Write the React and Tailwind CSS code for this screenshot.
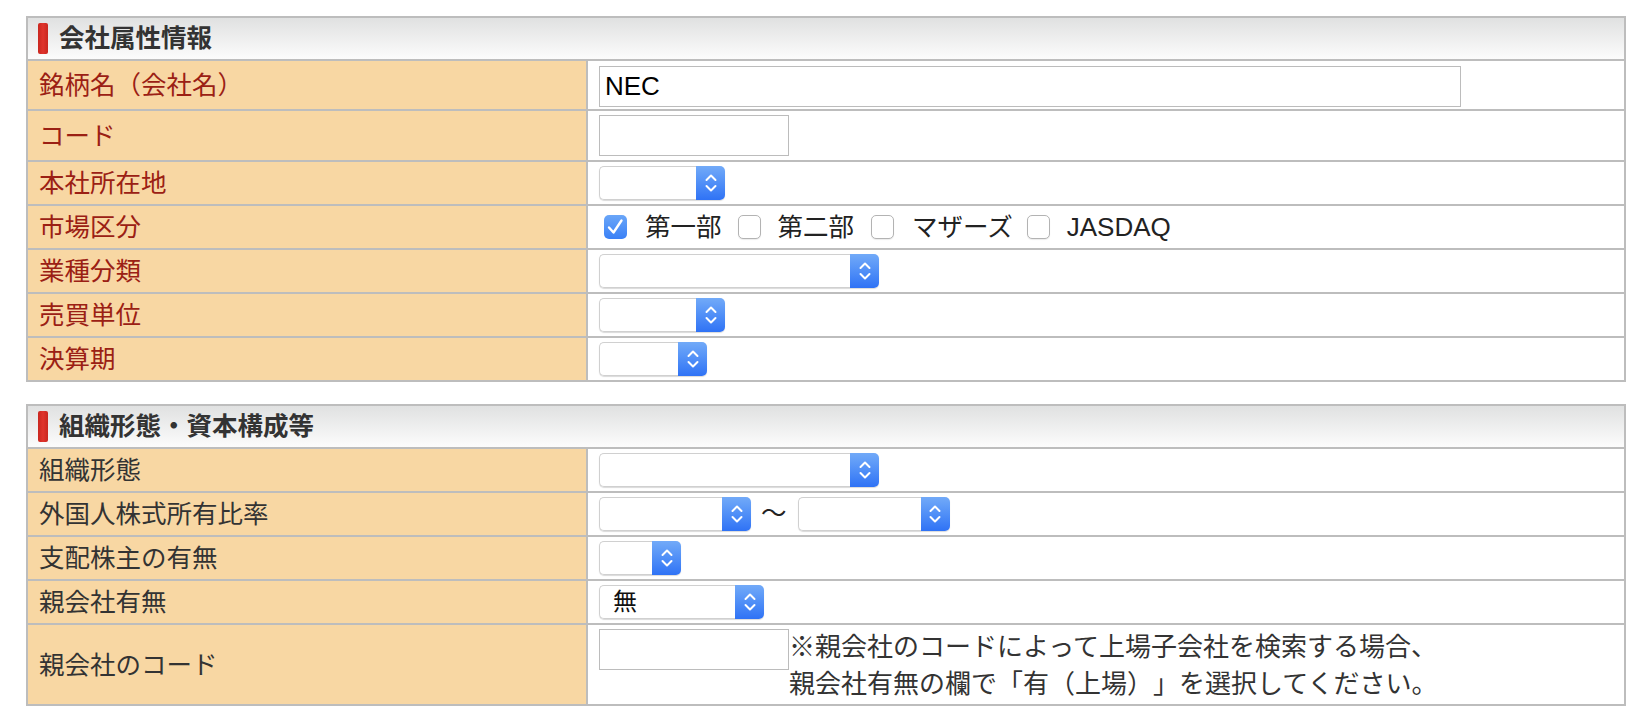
import React from "react";

function Chevrons() {
  return (
    <svg width="12" height="22" viewBox="0 0 12 22" fill="none" stroke="white" strokeWidth="2" strokeLinecap="round" strokeLinejoin="round">
      <path d="M1.5 8 L6 3.5 L10.5 8" />
      <path d="M1.5 14 L6 18.5 L10.5 14" />
    </svg>
  );
}

function Select({ className, value }) {
  return (
    <div className={"flex h-[34px] shrink-0 rounded-[5px] shadow-[0_1px_1px_rgba(0,0,0,0.15)] " + className}>
      <div className="flex flex-1 items-center rounded-l-[5px] border border-r-0 border-[#d0d0d0] bg-white pl-[13px] text-[24px] leading-none text-[#111]">
        {value}
      </div>
      <div className="flex w-[29px] items-center justify-center rounded-r-[5px] bg-gradient-to-b from-[#72aaf8] to-[#2f72f5]">
        <Chevrons />
      </div>
    </div>
  );
}

function Checkbox({ checked }) {
  if (checked) {
    return (
      <span className="flex h-[24px] w-[23px] shrink-0 items-center justify-center rounded-[5px] bg-gradient-to-b from-[#6aa6f8] to-[#3a80f6]">
        <svg width="23" height="24" viewBox="0 0 23 24" fill="none">
          <path d="M5 12.5 L9.5 17.5 L17.5 5.5" stroke="white" strokeWidth="2.4" strokeLinecap="round" strokeLinejoin="round" />
        </svg>
      </span>
    );
  }
  return <span className="block h-[24px] w-[23px] shrink-0 rounded-[5px] border border-[#b3b3b3] bg-white shadow-[0_1px_1px_rgba(0,0,0,0.08)]" />;
}

function TextInput({ className, value }) {
  return (
    <div className={"flex h-[41px] shrink-0 items-center border border-[#bcbcbc] bg-white pl-[5px] text-[26px] text-black " + className}>
      {value}
    </div>
  );
}

function Header({ title }) {
  return (
    <div className="flex h-[43px] items-center border-b-2 border-[#bdbdbd] bg-gradient-to-b from-[#e0e1e1] to-[#fcfcfc] pl-[10px]">
      <span className="h-[31px] w-[10px] rounded-[2px] bg-gradient-to-r from-[#c9271f] via-[#e0342c] to-[#c9271f]" />
      <span className="ml-[11px] text-[25.5px] font-bold leading-none text-[#333]">{title}</span>
    </div>
  );
}

function Row({ label, red, heightClass, top, last, children }) {
  return (
    <div className={"flex " + (last ? "" : "border-b-2 border-[#bdbdbd]")}>
      <div
        className={
          "flex w-[560px] shrink-0 items-center border-r-2 border-[#bdbdbd] bg-[#f8d7a3] pl-[11px] text-[25.5px] leading-[30px] " +
          heightClass +
          (red ? " text-[#9b2014]" : " text-[#333]")
        }
      >
        {label}
      </div>
      <div className={"flex flex-1 pl-[11px] " + heightClass + (top ? " items-start " + top : " items-center")}>{children}</div>
    </div>
  );
}

export default function App() {
  return (
    <div className="min-h-screen bg-white pl-[26px] pt-[16px] font-['Liberation_Sans','Noto_Sans_CJK_JP',sans-serif] [text-spacing-trim:space-all]">
      <div className="w-[1600px]">
        <div className="border-2 border-[#bdbdbd]">
          <Header title="会社属性情報" />
          <Row label="銘柄名（会社名）" red heightClass="h-[48px]" top="pt-[5px]">
            <TextInput className="w-[862px]" value="NEC" />
          </Row>
          <Row label="コード" red heightClass="h-[49px]" top="pt-[4px]">
            <TextInput className="w-[190px]" value="" />
          </Row>
          <Row label="本社所在地" red heightClass="h-[42px]">
            <Select className="w-[126px]" />
          </Row>
          <Row label="市場区分" red heightClass="h-[42px]">
            <div className="flex items-center pl-[5px] text-[25.5px] leading-[30px] text-[#222]">
              <Checkbox checked />
              <span className="ml-[18px]">第一部</span>
              <span className="ml-[16px]"><Checkbox /></span>
              <span className="ml-[17px]">第二部</span>
              <span className="ml-[17px]"><Checkbox /></span>
              <span className="ml-[18px]">マザーズ</span>
              <span className="ml-[14px]"><Checkbox /></span>
              <span className="ml-[17px] text-[26px]">JASDAQ</span>
            </div>
          </Row>
          <Row label="業種分類" red heightClass="h-[42px]">
            <Select className="w-[280px]" />
          </Row>
          <Row label="売買単位" red heightClass="h-[42px]">
            <Select className="w-[126px]" />
          </Row>
          <Row label="決算期" red heightClass="h-[42px]" last>
            <Select className="w-[108px]" />
          </Row>
        </div>

        <div className="mt-[22px] border-2 border-[#bdbdbd]">
          <Header title="組織形態・資本構成等" />
          <Row label="組織形態" heightClass="h-[42px]">
            <Select className="w-[280px]" />
          </Row>
          <Row label="外国人株式所有比率" heightClass="h-[42px]">
            <Select className="w-[152px]" />
            <span className="ml-[10px] text-[25.5px] leading-none text-[#222]">〜</span>
            <Select className="ml-[11px] w-[152px]" />
          </Row>
          <Row label="支配株主の有無" heightClass="h-[42px]">
            <Select className="w-[82px]" />
          </Row>
          <Row label="親会社有無" heightClass="h-[42px]">
            <Select className="w-[165px]" value="無" />
          </Row>
          <Row label="親会社のコード" heightClass="h-[79px]" top="pt-[4px]" last>
            <TextInput className="w-[190px]" value="" />
            <div className="text-[26px] leading-[37px] text-[#333]">
              <div>※親会社のコードによって上場子会社を検索する場合、</div>
              <div>親会社有無の欄で「有（上場）」を選択してください。</div>
            </div>
          </Row>
        </div>
      </div>
    </div>
  );
}
